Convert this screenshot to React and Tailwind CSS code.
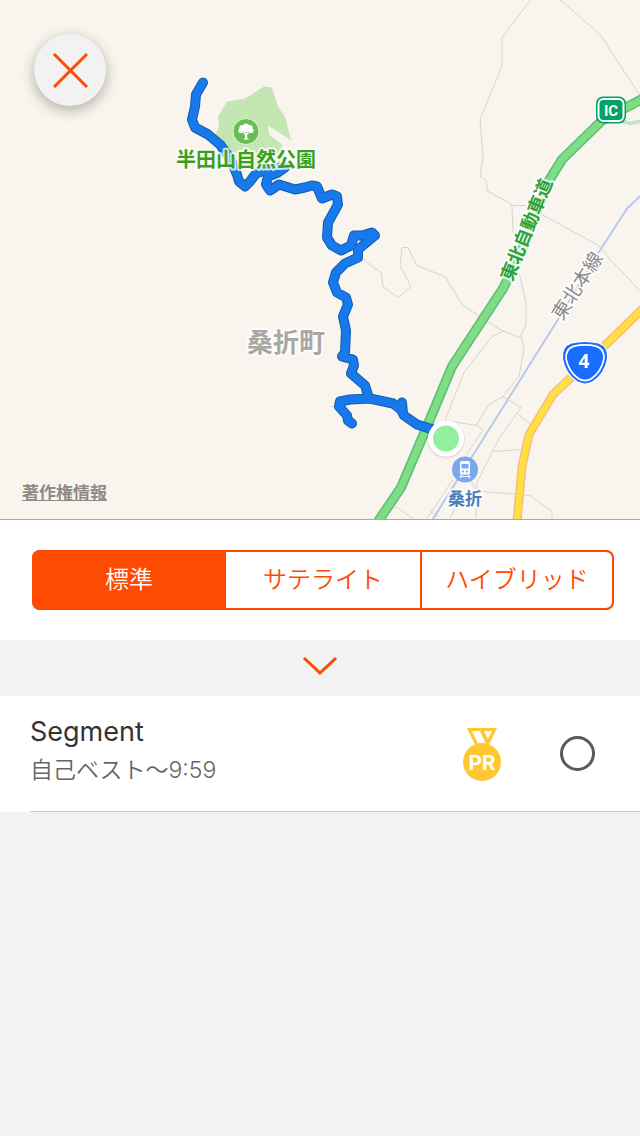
import React, { useState } from "react"

const ORANGE = "#fe4b03"

const minorRoads = [
  "M531 0 L502 38 V66 L480 120 L483 157 L480 177 L486 181 L488 192 L511 204 V206 H527",
  "M512 206 L513 233",
  "M560 0 L600 35 L640 96",
  "M542 215 L600 247 L610 260 L640 291",
  "M363 260 L381 273 L383 287 L398 298 L411 287 L400 266 L402 248 H408 L417 266 L445 277 L462 305 L487 322 L502 331 L522 339",
  "M519 273 L526 303 V325 L521 335 L524 350 L519 377 L503 397 L489 405 L476 426",
  "M505 331 L492 337 L464 373 L445 421 L477 426 L483 430 L467 455",
  "M503 397 L521 408 L517 414 L500 437 L477 483 L476 519",
  "M517 414 L531 425",
  "M493 452 L522 450",
  "M483 492 L530 496 L552 512 V519",
  "M453 480 L427 519",
  "M471 481 L475 490",
  "M459 500 L450 519",
  "M388 508 H397 L413 519",
  "M331 407 H339",
  "M430 512 L438 517",
]

const highway =
  "M645 98 L602 121 L562 160 L549 181 L520 255 L503 289 L452 367 L427 427 L401 488 L378 522"

const route =
  "M203 83 L196 95 L195 107 L192 120 L195 128 L208 135 L220 145 L230 159 L237 175 L239 182 L245 187 L250 182 L256 174 L267 170 L285 168 L278 173 L268 177 L266 185 L270 191 L279 185 L295 190 L305 188 L312 186 L317 187 L322 199 L332 195 L337 197 L338 205 L328 223 L327 238 L332 246 L341 251 L351 246 L354 236 L362 236 L372 233 L375 236 L358 250 V258 L345 264 L336 273 L333 283 L337 293 L346 298 L348 305 L343 317 L346 331 L345 353 L342 357 L353 360 L354 366 L351 374 L365 386 L369 399"

const branch =
  "M352 424 L348 421 L347 416 L339 407 L340 402 L350 400 L370 399 L393 404 L401 410 L404 416 L417 425 L436 431 M402 403 L403 414"

const shield =
  "M572 345 Q585 342 598 345 Q607 348 606 359 Q603 374 592 381 Q585 385 578 381 Q567 374 564 359 Q563 348 572 345 Z"

const MapDrawing = () => (
  <svg
    viewBox="0 0 640 520"
    className="block h-full w-full"
    preserveAspectRatio="xMidYMid slice"
    fontFamily="'Noto Sans CJK JP', sans-serif"
    textAnchor="middle"
    strokeLinejoin="round"
    role="img"
    aria-label="Map"
  >
    <rect width="640" height="520" fill="#f9f4ed" />

    {/* park */}
    <path
      d="M264 87 L272 88 L278 107 L285 117 L291 141 L268 126 L269 135 L282 145 L280 165 L250 170 L228 160 L215 135 L219 128 L218 117 L227 102 L245 99 Z"
      fill="#c4e6b3"
    />

    {/* minor roads */}
    <g fill="none" stroke="#d5d5cd" strokeWidth="1">
      {minorRoads.map((d) => (
        <path key={d} d={d} />
      ))}
    </g>

    {/* railway */}
    <path d="M642 195 L627 209 L598 254 L558 320 L432 521" fill="none" stroke="#b7cbe6" strokeWidth="2" />

    {/* national route */}
    <g fill="none">
      <path d="M645 307 L605 346 L553 395 L529 435 L522 467 L517 522" stroke="#f6bd8c" strokeWidth="9" />
      <path d="M645 307 L605 346 L553 395 L529 435 L522 467 L517 522" stroke="#ffe03c" strokeWidth="6" />
    </g>

    {/* highway */}
    <g fill="none">
      <path d="M616 120 L630 124 L640 122" stroke="#a9d9b5" strokeWidth="3" />
      <path d="M616 120 L630 124 L640 122" stroke="#e2f2df" strokeWidth="1" />
      <path d={highway} stroke="#58bf76" strokeWidth="10" />
      <path d={highway} stroke="#80dd83" strokeWidth="7" />
    </g>

    {/* recorded route */}
    <g fill="none" strokeLinecap="round">
      <path d={route} stroke="#0c5db4" strokeWidth="10" />
      <path d={branch} stroke="#0c5db4" strokeWidth="10" />
      <path d={route} stroke="#1779ea" strokeWidth="8" />
      <path d={branch} stroke="#1779ea" strokeWidth="8" />
    </g>

    {/* start point */}
    <circle cx="446" cy="440" r="19" fill="#000000" opacity="0.08" />
    <circle cx="446" cy="439" r="18" fill="#ffffff" />
    <circle cx="446" cy="439" r="13" fill="#92ef9e" />

    {/* park pin */}
    <circle cx="246" cy="132" r="13" fill="#6abd52" stroke="#e3f3da" strokeWidth="1" />
    <g fill="#ffffff">
      <circle cx="246" cy="127" r="3" />
      <circle cx="242" cy="128" r="2.600" />
      <circle cx="250" cy="128" r="2.600" />
      <circle cx="241" cy="131" r="2.600" />
      <circle cx="251" cy="131" r="2.600" />
      <circle cx="246" cy="130" r="3" />
      <path d="M242 133 L245 135 V138.500 L243 140 H249 L247.200 138.500 V135 L250 133 L247 133 L246 134 L245 133 Z" />
    </g>

    {/* station pin */}
    <circle cx="465" cy="470" r="13" fill="#78a9ee" />
    <g fill="#ffffff">
      <path fillRule="evenodd" d="M462 461.500 H468 Q470 461.500 470 463.500 V473 Q470 475 468 475 H462 Q460 475 460 473 V463.500 Q460 461.500 462 461.500 Z M461.500 464.500 V469 H468.500 V464.500 Z M462 471 V473 H464 V471 Z M466 471 V473 H468 V471 Z" />
      <path d="M461.500 475 L460 478.500 M468.500 475 L470 478.500 M461 477 H469" stroke="#ffffff" strokeWidth="1.200" />
    </g>

    {/* place names */}
    <g paintOrder="stroke" stroke="#ffffff" strokeOpacity="0.8" strokeWidth="4">
      <text x="246" y="167" fontSize="20" fontWeight="700" fill="#39a01c">半田山自然公園</text>
      <text x="286" y="352" fontSize="26" fontWeight="700" fill="#a9a7a3">桑折町</text>
      <text x="465" y="505" fontSize="17" fontWeight="700" fill="#4a7dbf">桑折</text>
      <text transform="translate(526 230) rotate(-68)" y="7" fontSize="18" fontWeight="700" fill="#2ea23b">
        東北自動車道
      </text>
      <text transform="translate(577 286) rotate(-57)" y="7" fontSize="19" fill="#8c8a87">
        東北本線
      </text>
    </g>

    {/* interchange sign */}
    <rect x="596" y="97" width="30" height="27" rx="7" fill="#00a266" />
    <rect x="598.500" y="99.500" width="25" height="22" rx="5" fill="none" stroke="#ffffff" strokeWidth="2" />
    <text x="611" y="116" fontFamily="Roboto, sans-serif" fontSize="15" fontWeight="700" fill="#ffffff">IC</text>

    {/* route shield */}
    <path d={shield} fill="#1a6cff" stroke="#ffffff" strokeWidth="4" />
    <path d={shield} fill="#1a6cff" stroke="#1a6cff" strokeWidth="2" />
    <path
      d={shield}
      transform="translate(585 363) scale(0.9) translate(-585 -363)"
      fill="none"
      stroke="#ffffff"
      strokeWidth="2"
    />
    <text x="584" y="368" fontFamily="'Noto Sans', sans-serif" fontSize="19" fontWeight="700" fill="#ffffff">4</text>
  </svg>
)

const MedalIcon = () => (
  <svg viewBox="0 0 40 54" className="h-[54px] w-10 shrink-0" role="img" aria-label="PR">
    <path
      fillRule="evenodd"
      d="M5 1 H35 L25 22 H15 Z M10 4 L16 17 H24 L18 4 Z M22 4 L26 12 L30 4 Z"
      fill="#ffc833"
    />
    <circle cx="20" cy="35" r="19" fill="#ffc833" />
    <text
      x="20"
      y="43"
      textAnchor="middle"
      fontFamily="Roboto, sans-serif"
      fontSize="21"
      fontWeight="700"
      fill="#ffffff"
    >
      PR
    </text>
  </svg>
)

const mapTypes = [
  { id: "standard", label: "標準" },
  { id: "satellite", label: "サテライト" },
  { id: "hybrid", label: "ハイブリッド" },
]

const App = () => {
  const [mapType, setMapType] = useState("standard")
  const [selected, setSelected] = useState(false)

  return (
    <div className="min-h-screen bg-[#f2f2f2] font-['Inter','Noto_Sans_CJK_JP',sans-serif]">
      <section className="relative aspect-[640/520] w-full overflow-hidden border-b border-[#aaa9a7] bg-[#f9f4ed]">
        <MapDrawing />
        <button
          type="button"
          aria-label="Close"
          className="absolute top-[34px] left-[34px] flex size-[72px] items-center justify-center rounded-full bg-[#f2f2f2] shadow-[0_4px_14px_rgba(0,0,0,0.3)]"
        >
          <svg viewBox="0 0 36 36" className="size-9" fill="none" stroke={ORANGE} strokeWidth="3">
            <path d="M2 2 L35 35 M35 2 L2 35" />
          </svg>
        </button>
        <a
          href="#legal"
          className="absolute bottom-[14px] left-[22px] text-[17px] leading-6 font-bold text-[#8c8b87] underline underline-offset-1"
        >
          著作権情報
        </a>
      </section>

      <section className="bg-white pt-[30px] pr-[26px] pb-[30px] pl-8">
        <div className="grid h-[60px] grid-cols-3 overflow-hidden rounded-lg bg-[#fe4b03]">
          {mapTypes.map((type) => (
            <button
              key={type.id}
              type="button"
              aria-pressed={mapType === type.id}
              onClick={() => setMapType(type.id)}
              className={
                mapType === type.id
                  ? "bg-[#fe4b03] text-2xl font-[350] text-white"
                  : "border-y-2 border-[#fe4b03] bg-white text-2xl font-[350] text-[#fe4b03] last:rounded-r-lg last:border-x-2"
              }
            >
              {type.label}
            </button>
          ))}
        </div>
      </section>

      <button type="button" aria-label="Collapse" className="flex h-14 w-full items-center justify-center">
        <svg viewBox="0 0 36 24" className="h-6 w-9" fill="none" stroke={ORANGE} strokeWidth="3">
          <path d="M2 2 L18 17 L34 2" />
        </svg>
      </button>

      <ul className="bg-white pl-[30px]">
        <li className="flex h-[116px] items-center border-b border-[#c8c8c8] pr-[45px]">
          <label htmlFor="segment" className="min-w-0 flex-1 pb-2">
            <span className="block text-[27px] leading-10 text-[#333333]">Segment</span>
            <span className="block text-[23px] leading-9 font-[350] text-[#666666]">自己ベスト〜9:59</span>
          </label>
          <MedalIcon />
          <input
            id="segment"
            type="checkbox"
            checked={selected}
            onChange={(e) => setSelected(e.target.checked)}
            className="ml-[58px] size-[35px] shrink-0 appearance-none rounded-full border-3 border-[#5a5a5a] checked:bg-[#fe4b03]"
          />
        </li>
      </ul>
    </div>
  )
}

export default App
